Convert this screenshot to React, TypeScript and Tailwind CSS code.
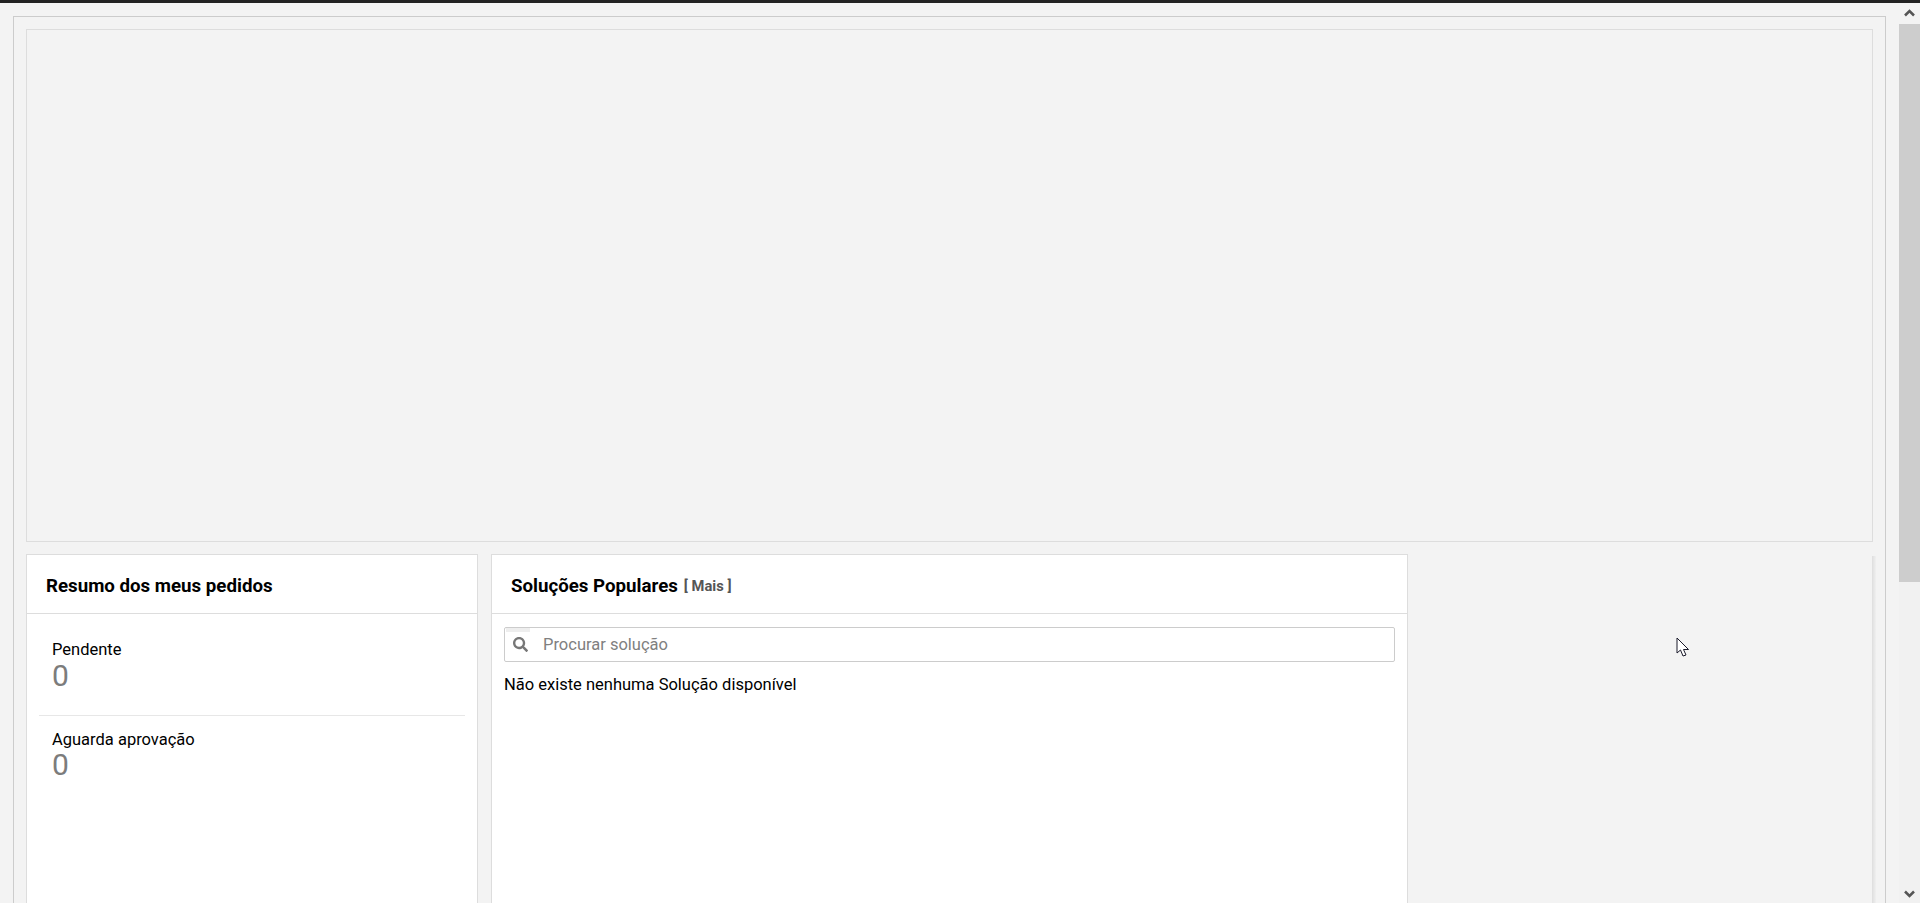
import { FaSearch } from "react-icons/fa";

function Scrollbar() {
  return (
    <div className="flex h-full w-[21px] shrink-0 flex-col bg-[#f1f1f1]">
      <div className="flex h-[21px] items-center justify-center bg-[#f3f3f3]">
        <svg width="11" height="8" viewBox="0 0 11 8" className="mb-[1px]">
          <path d="M1 6.5 L5.5 2 L10 6.5" fill="none" stroke="#555" strokeWidth="2.5" />
        </svg>
      </div>
      <div className="h-[558px] bg-[#cdcdcd]" />
      <div className="flex-1" />
      <div className="flex h-[21px] items-center justify-center">
        <svg width="11" height="8" viewBox="0 0 11 8" className="mt-[3px]">
          <path d="M1 1.5 L5.5 6 L10 1.5" fill="none" stroke="#555" strokeWidth="2.5" />
        </svg>
      </div>
    </div>
  );
}

function SummaryItem({ label, bordered }: { label: string; bordered?: boolean }) {
  return (
    <div className={bordered ? "border-b border-[#e7e7e7] px-[13px] pt-[25px] pb-[24px]" : "px-[13px] pt-[13px]"}>
      <div className="text-[16.5px] leading-[22px] text-black">{label}</div>
      <div className={bordered ? "text-[30px] leading-[30px] text-[#7c7c7c]" : "-mt-[1px] text-[30px] leading-[30px] text-[#7c7c7c]"}>0</div>
    </div>
  );
}

export default function App() {
  return (
    <div className="relative flex h-[903px] overflow-hidden border-t-[3px] border-[#222222] bg-[#f3f3f3] font-['Roboto',sans-serif]">
      <div className="min-w-0 flex-1 pt-[13px] pr-[13px] pl-[13px]">
        <div className="h-[900px] border-x border-t border-[#cccccc] px-[12px] pt-[12px]">
          <div className="h-[513px] border border-[#dddddd]" />
          <div className="mt-[12px] flex gap-[13px]">
            <div className="h-[400px] w-[452px] shrink-0 border border-[#dddddd] bg-white">
              <div className="flex h-[59px] items-center border-b border-[#dddddd] pt-[4px] pl-[19px] text-[18.7px] font-bold text-black">
                Resumo dos meus pedidos
              </div>
              <div className="px-[12px]">
                <SummaryItem label="Pendente" bordered />
                <SummaryItem label="Aguarda aprovação" />
              </div>
            </div>
            <div className="h-[400px] w-[917px] shrink-0 border border-[#dddddd] bg-white">
              <div className="flex h-[59px] items-center border-b border-[#dddddd] pt-[4px] pl-[19px] text-black">
                <span className="text-[18.7px] font-bold">Soluções Populares</span>
                <span className="ml-[6px] text-[14.7px] font-bold text-[#555555]">[ Mais ]</span>
              </div>
              <div className="px-[12px] pt-[13px]">
                <div className="relative flex h-[35px] items-center rounded-[2px] border border-[#cccccc] bg-white">
                  <div className="absolute top-0 left-[1px] h-[4px] w-[24px] bg-[#eeeeee]" />
                  <FaSearch className="ml-[8px] text-[15px] text-[#777777]" />
                  <span className="ml-[15px] pt-[1px] text-[16.5px] text-[#808080]">Procurar solução</span>
                </div>
                <div className="mt-[12px] text-[16.5px] leading-[22px] text-black">
                  Não existe nenhuma Solução disponível
                </div>
              </div>
            </div>
            <div className="mt-[2px] ml-[451px] h-[400px] w-[4px] shrink-0 bg-gradient-to-r from-[#dedede] to-[#f0f0f0]" />
          </div>
        </div>
      </div>
      <Scrollbar />
      <svg width="14" height="21" viewBox="0 0 14 21" className="absolute top-[634px] left-[1676px]">
        <path
          d="M1 1 L1 16 L4.5 13 L7 19 L10 18 L7.5 12.5 L12.5 12.5 Z"
          fill="#ffffff"
          stroke="#1a1a2a"
          strokeWidth="1"
        />
      </svg>
    </div>
  );
}
